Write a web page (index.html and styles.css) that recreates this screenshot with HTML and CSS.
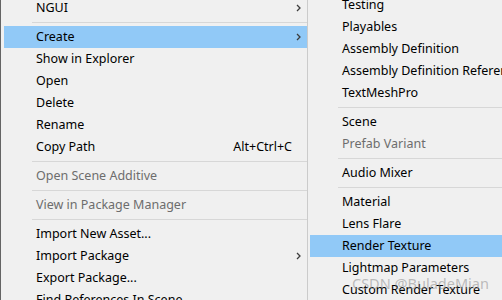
FILE: index.html
```html
<!DOCTYPE html>
<html lang="en">
<head>
  <meta charset="UTF-8" />
  <title>Context Menu</title>
  <link rel="stylesheet" href="styles.css">
</head>
<body>
  <div class="menus">
    <ul class="menu menu-main">
      <li class="item has-sub"><span class="label">NGUI</span><svg class="arrow" viewBox="0 0 5 8"><path d="M1 1 L4 4 L1 7" /></svg></li>
      <li class="sep"></li>
      <li class="item has-sub active"><span class="label">Create</span><svg class="arrow" viewBox="0 0 5 8"><path d="M1 1 L4 4 L1 7" /></svg></li>
      <li class="item"><span class="label">Show in Explorer</span></li>
      <li class="item"><span class="label">Open</span></li>
      <li class="item"><span class="label">Delete</span></li>
      <li class="item"><span class="label">Rename</span></li>
      <li class="item"><span class="label">Copy Path</span><span class="key">Alt+Ctrl+C</span></li>
      <li class="sep"></li>
      <li class="item disabled"><span class="label">Open Scene Additive</span></li>
      <li class="sep"></li>
      <li class="item disabled"><span class="label">View in Package Manager</span></li>
      <li class="sep"></li>
      <li class="item"><span class="label">Import New Asset...</span></li>
      <li class="item has-sub"><span class="label">Import Package</span><svg class="arrow" viewBox="0 0 5 8"><path d="M1 1 L4 4 L1 7" /></svg></li>
      <li class="item"><span class="label">Export Package...</span></li>
      <li class="item"><span class="label">Find References In Scene</span></li>
    </ul>

    <ul class="menu menu-sub">
      <li class="item"><span class="label">Testing</span></li>
      <li class="item"><span class="label">Playables</span></li>
      <li class="item"><span class="label">Assembly Definition</span></li>
      <li class="item"><span class="label">Assembly Definition Reference</span></li>
      <li class="item"><span class="label">TextMeshPro</span></li>
      <li class="sep"></li>
      <li class="item"><span class="label">Scene</span></li>
      <li class="item disabled"><span class="label">Prefab Variant</span></li>
      <li class="sep"></li>
      <li class="item"><span class="label">Audio Mixer</span></li>
      <li class="sep"></li>
      <li class="item"><span class="label">Material</span></li>
      <li class="item"><span class="label">Lens Flare</span></li>
      <li class="item active"><span class="label">Render Texture</span></li>
      <li class="item"><span class="label">Lightmap Parameters</span></li>
      <li class="item"><span class="label">Custom Render Texture</span></li>
    </ul>
  </div>

  <div class="watermark">CSDN @BuladeMian</div>
</body>
</html>
```

FILE: styles.css
```css
* { box-sizing: border-box; }

html, body {
  height: 100%;
}

body {
  margin: 0;
  background: #f0f0f0;
  font-family: "Noto Sans", "Liberation Sans", sans-serif;
  font-size: 12.5px;
  color: #000;
  overflow: hidden;
  position: relative;
}

.menus {
  display: flex;
  height: 100%;
}

.menu {
  list-style: none;
  margin: 0;
  padding: 0;
  background: #f0f0f0;
}

.menu-main {
  width: 307px;
  flex: none;
  margin-top: -3px;
  padding-left: 3px;
  border-left: 1px solid #646464;
}

.menu-sub {
  flex: 1;
  margin-top: -6px;
  padding-left: 2px;
  border-left: 1px solid #cbcbcb;
  min-width: 0;
}

.item {
  display: flex;
  align-items: center;
  height: 22px;
  padding: 0 6px 1px 32px;
  white-space: nowrap;
}

.item .label {
  flex: 1;
}

.item.active {
  background: #91c9f7;
}

.item.disabled {
  color: #6d6d6d;
}

.key {
  margin-right: 9px;
}

.arrow {
  width: 5px;
  height: 8px;
  fill: none;
  stroke: #3c3c3c;
  stroke-width: 1.3;
}

.sep {
  height: 7px;
  padding-top: 3px;
  margin-left: 28px;
}

.sep::before {
  content: "";
  display: block;
  height: 1px;
  background: #d7d7d7;
}

.watermark {
  position: absolute;
  left: 352px;
  top: 273px;
  font-size: 14.5px;
  white-space: nowrap;
  color: rgba(140, 140, 140, 0.55);
  pointer-events: none;
}
```
